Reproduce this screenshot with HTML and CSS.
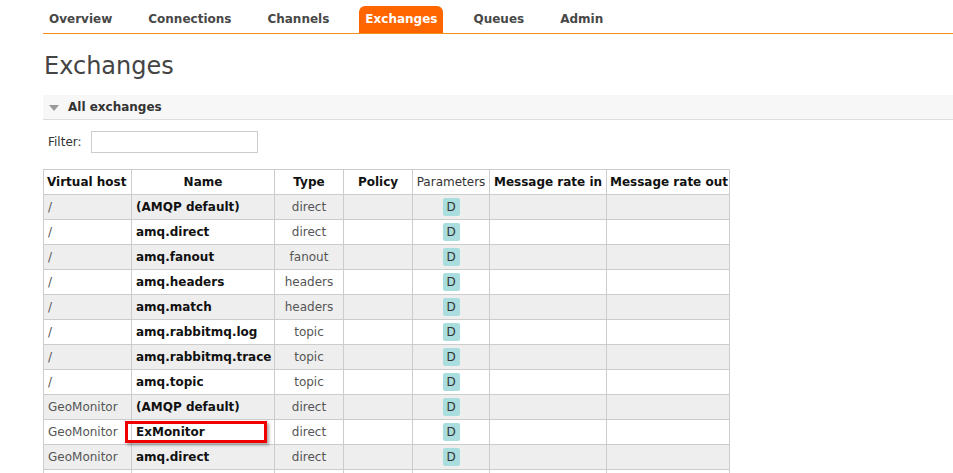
FILE: index.html
```html
<!DOCTYPE html>
<html>
<head>
<meta charset="utf-8">
<link rel="stylesheet" href="styles.css">
</head>
<body>
<div class="page">
  <nav class="menu">
    <a class="tab">Overview</a>
    <a class="tab">Connections</a>
    <a class="tab">Channels</a>
    <a class="tab active">Exchanges</a>
    <a class="tab">Queues</a>
    <a class="tab">Admin</a>
  </nav>
  <h1 class="title">Exchanges</h1>
  <div class="section-head">
    <span class="tri"></span>
    <span class="section-title">All exchanges</span>
  </div>
  <div class="filter">
    <label class="filter-label">Filter:</label>
    <input class="filter-input" type="text">
  </div>
  <table class="list">
    <colgroup>
      <col class="w1"><col class="w2"><col class="w3"><col class="w4"><col class="w5"><col class="w6"><col class="w7">
    </colgroup>
    <thead>
      <tr>
        <th class="left">Virtual host</th>
        <th>Name</th>
        <th>Type</th>
        <th>Policy</th>
        <th class="normal">Parameters</th>
        <th>Message rate in</th>
        <th>Message rate out</th>
      </tr>
    </thead>
    <tbody>
      <tr class="alt"><td class="vh">/</td><td class="nm">(AMQP default)</td><td class="ty">direct</td><td></td><td class="pm"><span class="badge">D</span></td><td></td><td></td></tr>
      <tr><td class="vh">/</td><td class="nm">amq.direct</td><td class="ty">direct</td><td></td><td class="pm"><span class="badge">D</span></td><td></td><td></td></tr>
      <tr class="alt"><td class="vh">/</td><td class="nm">amq.fanout</td><td class="ty">fanout</td><td></td><td class="pm"><span class="badge">D</span></td><td></td><td></td></tr>
      <tr><td class="vh">/</td><td class="nm">amq.headers</td><td class="ty">headers</td><td></td><td class="pm"><span class="badge">D</span></td><td></td><td></td></tr>
      <tr class="alt"><td class="vh">/</td><td class="nm">amq.match</td><td class="ty">headers</td><td></td><td class="pm"><span class="badge">D</span></td><td></td><td></td></tr>
      <tr><td class="vh">/</td><td class="nm">amq.rabbitmq.log</td><td class="ty">topic</td><td></td><td class="pm"><span class="badge">D</span></td><td></td><td></td></tr>
      <tr class="alt"><td class="vh">/</td><td class="nm">amq.rabbitmq.trace</td><td class="ty">topic</td><td></td><td class="pm"><span class="badge">D</span></td><td></td><td></td></tr>
      <tr><td class="vh">/</td><td class="nm">amq.topic</td><td class="ty">topic</td><td></td><td class="pm"><span class="badge">D</span></td><td></td><td></td></tr>
      <tr class="alt"><td class="vh">GeoMonitor</td><td class="nm">(AMQP default)</td><td class="ty">direct</td><td></td><td class="pm"><span class="badge">D</span></td><td></td><td></td></tr>
      <tr><td class="vh">GeoMonitor</td><td class="nm marked">ExMonitor<span class="highlight"></span></td><td class="ty">direct</td><td></td><td class="pm"><span class="badge">D</span></td><td></td><td></td></tr>
      <tr class="alt"><td class="vh">GeoMonitor</td><td class="nm">amq.direct</td><td class="ty">direct</td><td></td><td class="pm"><span class="badge">D</span></td><td></td><td></td></tr>
      <tr><td class="vh"></td><td class="nm"></td><td class="ty"></td><td></td><td class="pm"><span class="badge"></span></td><td></td><td></td></tr>
    </tbody>
  </table>
</div>
</body>
</html>
```

FILE: styles.css
```css
html, body {
  margin: 0;
  padding: 0;
  background: #fff;
}
body {
  font-family: "DejaVu Sans", Verdana, sans-serif;
  font-size: 12px;
  color: #484848;
  overflow: hidden;
}
.page {
  padding-left: 43px;
}
.menu {
  display: flex;
  align-items: flex-end;
  gap: 24px;
  height: 33px;
  border-bottom: 1px solid #f39019;
  box-sizing: content-box;
}
.tab {
  display: block;
  font-weight: bold;
  color: #484848;
  padding: 0 6px;
  height: 27px;
  line-height: 27px;
  border-radius: 6px 6px 0 0;
}
.tab.active {
  background: #ff6600;
  color: #fff;
}
.title {
  margin: 0;
  padding-top: 17px;
  font-weight: normal;
  font-size: 24px;
  line-height: 30px;
  color: #444;
  height: 44px;
  padding-left: 1px;
}
.section-head {
  display: flex;
  align-items: center;
  height: 24px;
  background: #f7f7f7;
  border-bottom: 1px solid #ddd;
  padding-left: 6px;
}
.tri {
  width: 0;
  height: 0;
  border-left: 5px solid transparent;
  border-right: 5px solid transparent;
  border-top: 6px solid #999;
  margin-right: 9px;
  margin-top: 1px;
}
.section-title {
  font-weight: bold;
  color: #333;
}
.filter {
  display: flex;
  align-items: center;
  height: 22px;
  margin-top: 11px;
  padding-left: 5px;
}
.filter-label {
  color: #333;
  margin-right: 9px;
}
.filter-input {
  width: 167px;
  height: 22px;
  box-sizing: border-box;
  border: 1px solid #ccc;
  margin: 0;
  padding: 0 3px;
  font: inherit;
}
.list {
  margin-top: 16px;
  border-collapse: collapse;
  table-layout: fixed;
  width: 687px;
  border: 1px solid #ccc;
}
.w1 { width: 88px; }
.w2 { width: 143px; }
.w3 { width: 69px; }
.w4 { width: 69px; }
.w5 { width: 77px; }
.w6 { width: 117px; }
.w7 { width: 123px; }
.list th, .list td {
  border: 1px solid #ccc;
  height: 24px;
  padding: 0 4px;
  white-space: nowrap;
  overflow: visible;
  vertical-align: middle;
}
.list th {
  color: #111;
  font-weight: bold;
  text-align: center;
  padding: 0 3px;
}
.list th.left {
  text-align: left;
}
.list th.normal {
  font-weight: normal;
  color: #333;
}
.list tr.alt td {
  background: #eee;
}
.vh {
  color: #555;
}
.nm {
  font-weight: bold;
  color: #111;
}
.ty {
  text-align: center;
  color: #555;
}
.pm {
  text-align: center;
}
.badge {
  display: inline-block;
  width: 17px;
  height: 18px;
  line-height: 18px;
  background: #aadddd;
  border-radius: 2px;
  color: #333;
  text-align: center;
  vertical-align: middle;
}
.marked {
  position: relative;
}
.highlight {
  position: absolute;
  left: -7px;
  top: 1px;
  width: 142px;
  height: 22px;
  box-sizing: border-box;
  border: 3px solid #f00000;
  box-shadow: 2px 2px 3px rgba(0, 0, 0, 0.35);
}
```
